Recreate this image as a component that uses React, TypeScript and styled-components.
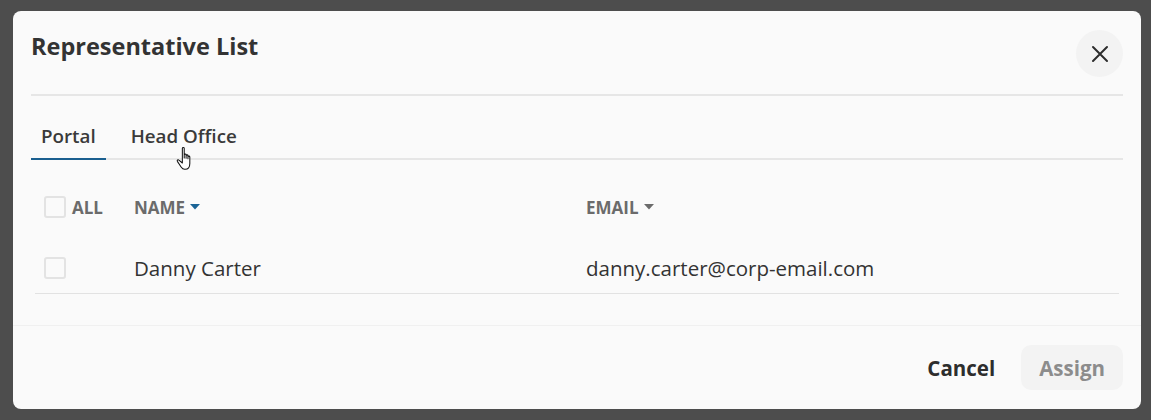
import React from "react";
import styled, { createGlobalStyle } from "styled-components";

const Global = createGlobalStyle`
  html, body { margin: 0; padding: 0; background: #4d4d4d; }
  body { font-family: "Open Sans", "Noto Sans", Arial, sans-serif; }
  * { box-sizing: border-box; }
`;

const Page = styled.div`
  width: 1151px;
  height: 420px;
  padding: 11px 10px 0 13px;
  overflow: hidden;
  position: relative;
`;

const Modal = styled.div`
  width: 1128px;
  height: 398px;
  background: #fafafa;
  border-radius: 8px;
  display: flex;
  flex-direction: column;
`;

const Header = styled.div`
  margin: 0 18px;
  padding: 19px 0 17px;
  border-bottom: 2px solid #e6e6e6;
  display: flex;
  justify-content: space-between;
  align-items: flex-start;
`;

const Title = styled.h1`
  margin: 0;
  font-size: 23.5px;
  line-height: 32px;
  font-weight: 700;
  color: #333;
`;

const CloseButton = styled.button`
  width: 47px;
  height: 47px;
  border-radius: 50%;
  border: none;
  background: #f3f3f3;
  display: flex;
  align-items: center;
  justify-content: center;
  padding: 0;
  color: #2d2d2d;
`;

const Body = styled.div`
  padding: 0 18px 31px;
  flex: 1;
  border-bottom: 1px solid #f0f0f0;
`;

const TabBar = styled.div`
  margin-top: 16px;
  display: flex;
  gap: 15px;
  border-bottom: 2px solid #e6e6e6;
`;

const Tab = styled.div<{ $active?: boolean }>`
  padding: 12px 10px 10px;
  margin-bottom: -2px;
  font-size: 18.8px;
  line-height: 24px;
  font-weight: 600;
  color: #3a3a3a;
  border-bottom: 2px solid ${(p) => (p.$active ? "#1a5f8f" : "transparent")};
`;

const Table = styled.div`
  margin: 20px 4px 0;
`;

const Row = styled.div<{ $head?: boolean }>`
  display: grid;
  grid-template-columns: 99px 452px 1fr;
  align-items: center;
  height: ${(p) => (p.$head ? "54px" : "60px")};
  padding-top: ${(p) => (p.$head ? "0" : "8px")};
  border-bottom: ${(p) => (p.$head ? "none" : "1px solid #e2e2e2")};
`;

const CheckCell = styled.div`
  display: flex;
  align-items: center;
  gap: 6px;
  padding-left: 9px;
`;

const Checkbox = styled.span`
  width: 22px;
  height: 22px;
  border: 2px solid #e3e3e3;
  border-radius: 3px;
  background: #fafafa;
`;

const HeadLabel = styled.span`
  display: inline-flex;
  align-items: center;
  gap: 5px;
  font-size: 17px;
  font-weight: 700;
  color: #6b6b6b;
  text-transform: uppercase;
`;

const Cell = styled.span`
  font-size: 20.5px;
  color: #333;
`;

const Footer = styled.div`
  padding: 19px 18px 19px;
  display: flex;
  justify-content: flex-end;
  align-items: center;
  gap: 10px;
`;

const FooterButton = styled.button<{ $disabled?: boolean }>`
  height: 45px;
  padding: 0 ${(p) => (p.$disabled ? "18px" : "16px")};
  border: none;
  border-radius: 10px;
  background: ${(p) => (p.$disabled ? "#f3f3f3" : "transparent")};
  color: ${(p) => (p.$disabled ? "#8c8c8c" : "#2d2d2d")};
  font-family: inherit;
  font-size: 20.5px;
  font-weight: 700;
`;

const Cursor = styled.svg`
  position: absolute;
  left: 176px;
  top: 146px;
`;

const Caret = ({ color }: { color: string }) => (
  <svg width="10" height="6" viewBox="0 0 10 6">
    <path d="M0 0 L10 0 L5 5.5 Z" fill={color} />
  </svg>
);

export default function App() {
  return (
    <>
      <Global />
      <Page>
        <Modal>
          <Header>
            <Title>Representative List</Title>
            <CloseButton aria-label="Close">
              <svg width="18" height="18" viewBox="0 0 18 18">
                <path d="M2 2 L16 16 M16 2 L2 16" stroke="#2d2d2d" strokeWidth="2" strokeLinecap="round" />
              </svg>
            </CloseButton>
          </Header>
          <Body>
            <TabBar>
              <Tab $active>Portal</Tab>
              <Tab>Head Office</Tab>
            </TabBar>
            <Table>
              <Row $head>
                <CheckCell>
                  <Checkbox />
                  <HeadLabel>All</HeadLabel>
                </CheckCell>
                <HeadLabel>
                  Name <Caret color="#1a6496" />
                </HeadLabel>
                <HeadLabel>
                  Email <Caret color="#6b6b6b" />
                </HeadLabel>
              </Row>
              <Row>
                <CheckCell>
                  <Checkbox />
                </CheckCell>
                <Cell>Danny Carter</Cell>
                <Cell>danny.carter@corp-email.com</Cell>
              </Row>
            </Table>
          </Body>
          <Footer>
            <FooterButton>Cancel</FooterButton>
            <FooterButton $disabled>Assign</FooterButton>
          </Footer>
        </Modal>
        <Cursor width="21" height="28" viewBox="0 0 20 27">
          <path
            d="M6 2.2c0-1.1 1.8-1.1 1.8 0v9.3V8.6c0-1.1 1.8-1.1 1.8 0v3.2-2.4c0-1.1 1.8-1.1 1.8 0v2.8-1.6c0-1.1 1.8-1.1 1.8 0v6.2c0 3.4-1.8 5.6-4.6 5.6H8.3c-1.7 0-2.6-.9-3.5-2.2L1.2 14.8c-.6-1 .6-2 1.5-1.2L6 16.4Z"
            fill="#fff"
            stroke="#111"
            strokeWidth="1"
            strokeLinejoin="round"
          />
        </Cursor>
      </Page>
    </>
  );
}
